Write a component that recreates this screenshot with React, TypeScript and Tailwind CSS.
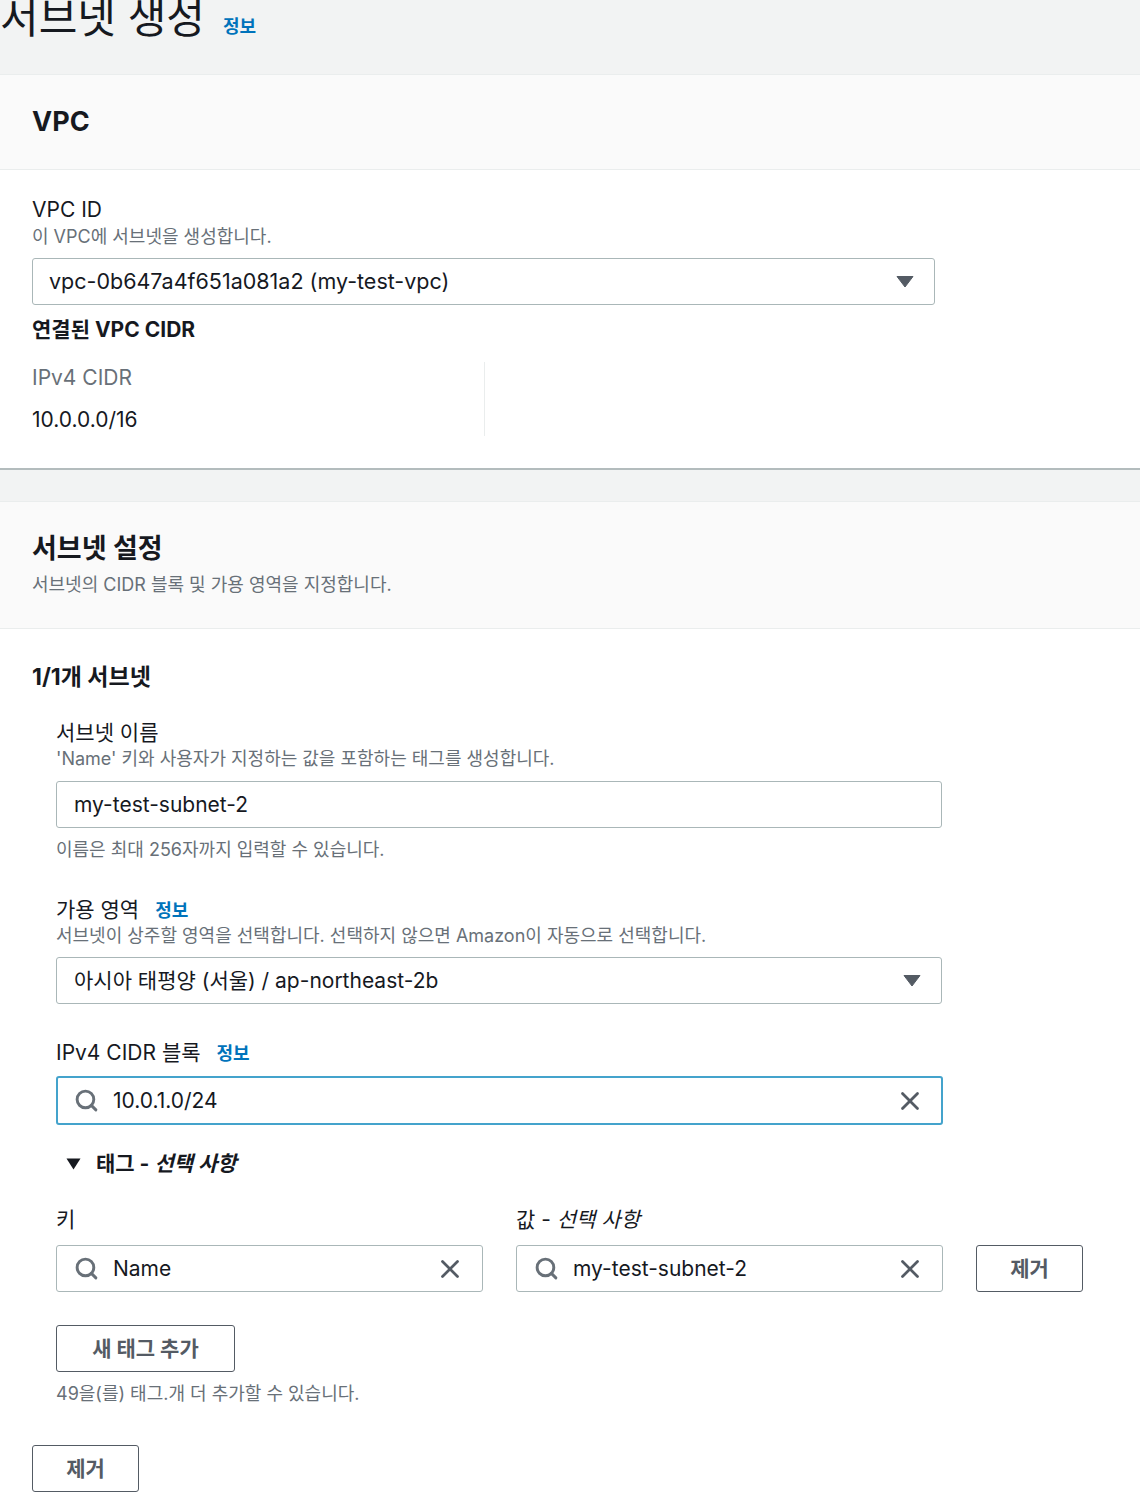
import { Search, X } from 'lucide-react';

function Caret() {
  return (
    <svg width="18" height="13" viewBox="0 0 18 13" className="shrink-0">
      <path d="M1 1.5 H17 L9 12 Z" fill="#545b64" stroke="#545b64" strokeLinejoin="round" />
    </svg>
  );
}

function Info({ className = '' }: { className?: string }) {
  return <span className={`text-[18px] font-bold text-[#0073bb] ${className}`}>정보</span>;
}

function Label({ children }: { children: React.ReactNode }) {
  return <div className="text-[21px] leading-[28px] text-[#16191f]">{children}</div>;
}

function Desc({ children, className = '' }: { children: React.ReactNode; className?: string }) {
  return <div className={`text-[18px] leading-[24px] text-[#687078] ${className}`}>{children}</div>;
}

function SearchInput({ value, focused, className = '' }: { value: string; focused?: boolean; className?: string }) {
  return (
    <div
      className={`flex items-center bg-white rounded-[3px] ${
        focused
          ? 'h-[49px] border-2 border-[#44a3cc] pl-[16px] pr-[16px]'
          : 'h-[47px] border border-[#aab7b8] pl-[17px] pr-[17px]'
      } ${className}`}
    >
      <Search className="w-[25px] h-[25px] text-[#687078]" strokeWidth={2.8} />
      <span className="ml-[14px] flex-1 text-[21px] text-[#16191f]">{value}</span>
      <X className="w-[30px] h-[30px] text-[#545b64]" strokeWidth={2.2} />
    </div>
  );
}

function Button({ children, className = '' }: { children: React.ReactNode; className?: string }) {
  return (
    <div
      className={`h-[47px] flex items-center justify-center border border-[#545b64] rounded-[3px] bg-white text-[21px] font-bold text-[#545b64] ${className}`}
    >
      {children}
    </div>
  );
}

export default function App() {
  return (
    <div className="min-h-[1510px] bg-white font-['Inter','Noto_Sans_CJK_KR',sans-serif] text-[#16191f]">
      {/* page header */}
      <header className="h-[75px] bg-[#f2f3f3] border-b border-[#eaeded] overflow-hidden">
        <div className="-mt-[8px] flex items-baseline">
          <h1 className="text-[42px] leading-[52px] font-normal text-[#16191f]">서브넷 생성</h1>
          <Info className="ml-[18px]" />
        </div>
      </header>

      {/* VPC container */}
      <section className="border-b-2 border-[#b3bcbd]">
        <div className="h-[95px] bg-[#fafafa] border-b border-[#eaeded] px-8 flex items-center">
          <h2 className="text-[27px] font-bold leading-[34px]">VPC</h2>
        </div>
        <div className="px-8 pt-[26px] pb-[32px]">
          <Label>VPC ID</Label>
          <Desc className="mt-[1px]">이 VPC에 서브넷을 생성합니다.</Desc>
          <div className="mt-[9px] w-[903px] h-[47px] border border-[#aab7b8] rounded-[3px] flex items-center pl-[16px] pr-[20px]">
            <span className="flex-1 text-[21.5px]">vpc-0b647a4f651a081a2 (my-test-vpc)</span>
            <Caret />
          </div>
          <div className="mt-[11px] text-[21px] leading-[28px] font-bold">연결된 VPC CIDR</div>
          <div className="mt-[18px] w-[453px] border-r border-[#eaeded] py-[2px]">
            <div className="text-[21px] leading-[28px] text-[#687078]">IPv4 CIDR</div>
            <div className="mt-[14px] text-[21px] leading-[28px]">10.0.0.0/16</div>
          </div>
        </div>
      </section>

      <div className="h-[31px] bg-[#f2f3f3]" />

      {/* Subnet settings container */}
      <section className="border-t border-[#eaeded]">
        <div className="bg-[#fafafa] border-b border-[#eaeded] px-8 pt-[30px] pb-[31px]">
          <h2 className="text-[27px] font-bold leading-[34px]">서브넷 설정</h2>
          <Desc className="mt-[7px]">서브넷의 CIDR 블록 및 가용 영역을 지정합니다.</Desc>
        </div>

        <div className="px-8 pt-[33px] pb-[18px]">
          <h3 className="text-[23px] leading-[30px] font-bold">1/1개 서브넷</h3>

          <div className="pl-6">
            <div className="mt-[27px]">
              <Label>서브넷 이름</Label>
              <Desc>'Name' 키와 사용자가 지정하는 값을 포함하는 태그를 생성합니다.</Desc>
              <div className="mt-[10px] w-[886px] h-[47px] border border-[#aab7b8] rounded-[3px] flex items-center pl-[17px]">
                <span className="text-[21px]">my-test-subnet-2</span>
              </div>
              <Desc className="mt-[10px]">이름은 최대 256자까지 입력할 수 있습니다.</Desc>
            </div>

            <div className="mt-[34px]">
              <div className="flex items-baseline">
                <Label>가용 영역</Label>
                <Info className="ml-[16px]" />
              </div>
              <Desc>서브넷이 상주할 영역을 선택합니다. 선택하지 않으면 Amazon이 자동으로 선택합니다.</Desc>
              <div className="mt-[9px] w-[886px] h-[47px] border border-[#aab7b8] rounded-[3px] flex items-center pl-[17px] pr-[20px]">
                <span className="flex-1 text-[21px]">아시아 태평양 (서울) / ap-northeast-2b</span>
                <Caret />
              </div>
            </div>

            <div className="mt-[35px]">
              <div className="flex items-baseline">
                <Label>IPv4 CIDR 블록</Label>
                <Info className="ml-[16px]" />
              </div>
              <SearchInput value="10.0.1.0/24" focused className="mt-[9px] w-[887px]" />
            </div>

            <div className="mt-[25px] pl-[10px] flex items-center h-[28px]">
              <svg width="15" height="12" viewBox="0 0 15 12">
                <path d="M0.5 0.5 H14.5 L7.5 11.5 Z" fill="#16191f" />
              </svg>
              <span className="ml-[15px] text-[21px] font-bold">
                태그 - <span className="italic">선택 사항</span>
              </span>
            </div>

            <div className="mt-[28px] flex items-end gap-[33px]">
              <div className="w-[427px]">
                <Label>키</Label>
                <SearchInput value="Name" className="mt-[11px]" />
              </div>
              <div className="w-[427px]">
                <Label>
                  값 - <span className="italic">선택 사항</span>
                </Label>
                <SearchInput value="my-test-subnet-2" className="mt-[11px]" />
              </div>
              <Button className="w-[107px]">제거</Button>
            </div>

            <Button className="mt-[33px] w-[179px]">새 태그 추가</Button>
            <Desc className="mt-[10px]">49을(를) 태그.개 더 추가할 수 있습니다.</Desc>
          </div>

          <Button className="mt-[39px] w-[107px]">제거</Button>
        </div>
      </section>
    </div>
  );
}
